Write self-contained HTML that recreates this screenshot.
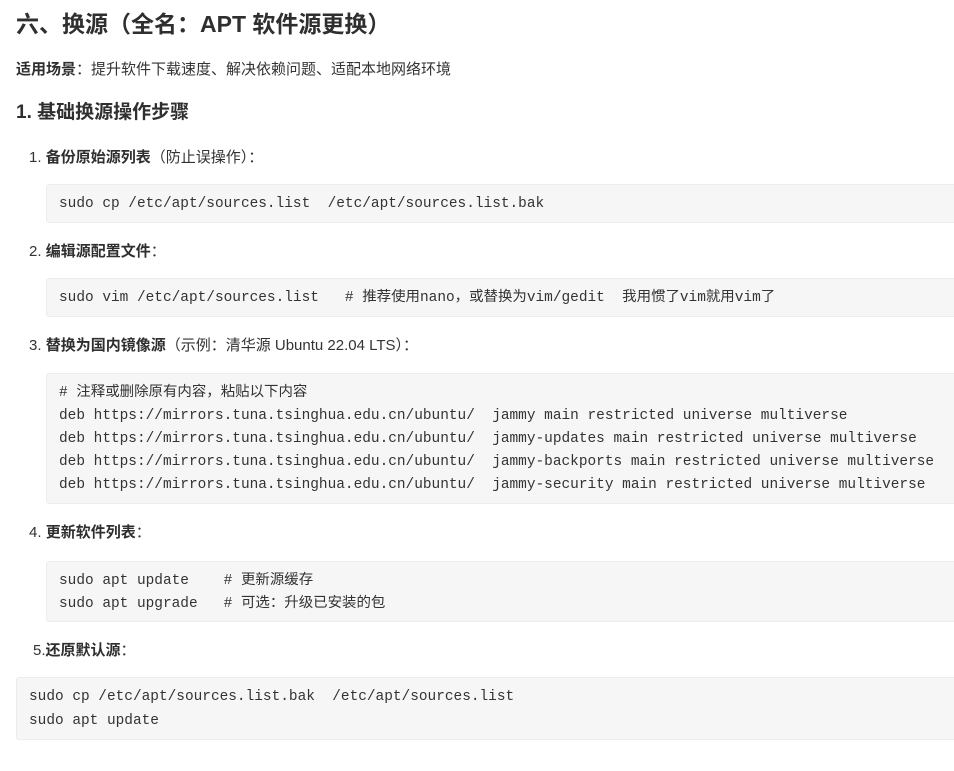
<!DOCTYPE html>
<html><head><meta charset="utf-8"><style>
body{margin:0;width:954px;height:771px;background:#fff;position:relative;overflow:hidden;color:#333;font-family:"Liberation Sans","Noto Sans CJK SC",sans-serif}
.a{position:absolute;white-space:nowrap}
h1{position:absolute;margin:0;left:16px;top:9px;font-size:23px;line-height:30px;font-weight:bold;color:#2f2f2f}
h2{position:absolute;margin:0;left:16px;top:100px;font-size:19px;line-height:26px;font-weight:bold;color:#2f2f2f}
.p{font-size:15px;line-height:22px;color:#333}
.c{position:absolute;left:46px;right:-10px;background:#f6f6f6;border:1px solid #ececec;border-radius:3px;font-family:"Liberation Mono","Noto Sans CJK SC",monospace;font-size:14.45px;line-height:23px;color:#333;padding:0 0 0 12px;box-sizing:border-box;white-space:pre}
b{font-weight:bold;color:#2f2f2f}
</style></head><body>
<h1>六、换源（全名：APT 软件源更换）</h1>
<div class="a p" style="left:16px;top:59px"><b>适用场景</b>：提升软件下载速度、解决依赖问题、适配本地网络环境</div>
<h2>1. 基础换源操作步骤</h2>
<div class="a p" style="left:29px;top:147px">1. <b>备份原始源列表</b>（防止误操作）：</div>
<div class="c" style="top:184px;height:39px;padding-top:8px">sudo cp /etc/apt/sources.list  /etc/apt/sources.list.bak</div>
<div class="a p" style="left:29px;top:241px">2. <b>编辑源配置文件</b>：</div>
<div class="c" style="top:278px;height:39px;padding-top:8px">sudo vim /etc/apt/sources.list   # 推荐使用nano，或替换为vim/gedit  我用惯了vim就用vim了</div>
<div class="a p" style="left:29px;top:335px">3. <b>替换为国内镜像源</b>（示例：清华源 Ubuntu 22.04 LTS）：</div>
<div class="c" style="top:373px;height:131px;padding-top:8px"># 注释或删除原有内容，粘贴以下内容
deb https://mirrors.tuna.tsinghua.edu.cn/ubuntu/  jammy main restricted universe multiverse
deb https://mirrors.tuna.tsinghua.edu.cn/ubuntu/  jammy-updates main restricted universe multiverse
deb https://mirrors.tuna.tsinghua.edu.cn/ubuntu/  jammy-backports main restricted universe multiverse
deb https://mirrors.tuna.tsinghua.edu.cn/ubuntu/  jammy-security main restricted universe multiverse</div>
<div class="a p" style="left:29px;top:522px">4. <b>更新软件列表</b>：</div>
<div class="c" style="top:561px;height:61px;padding-top:8px">sudo apt update    # 更新源缓存
sudo apt upgrade   # 可选：升级已安装的包</div>
<div class="a p" style="left:33px;top:640px">5.<b>还原默认源</b>：</div>
<div class="c" style="left:16px;top:677px;height:63px;padding-top:7px;line-height:24px">sudo cp /etc/apt/sources.list.bak  /etc/apt/sources.list
sudo apt update</div>
</body></html>
